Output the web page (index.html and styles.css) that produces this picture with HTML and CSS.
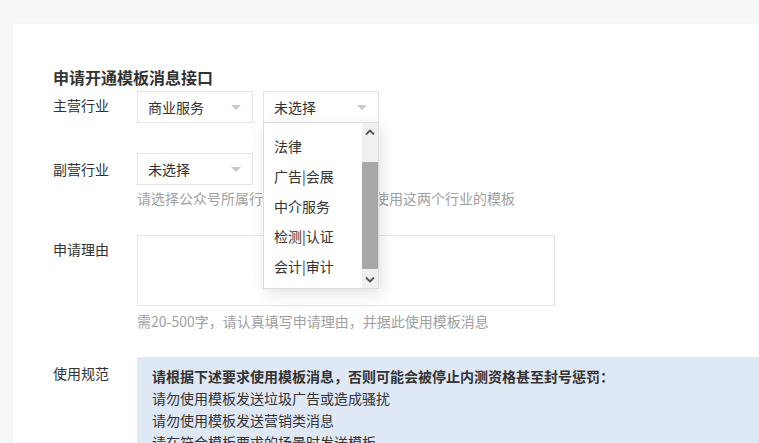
FILE: index.html
```html
<!DOCTYPE html>
<html lang="zh-CN">
<head>
<meta charset="utf-8">
<title>申请开通模板消息接口</title>
<link rel="stylesheet" href="styles.css">
</head>
<body>
<div class="card">
  <h2 class="title">申请开通模板消息接口</h2>

  <div class="row row-main">
    <div class="label">主营行业</div>
    <div class="controls">
      <div class="select"><span>商业服务</span><i class="caret"></i></div>
      <div class="select-wrap">
        <div class="select"><span>未选择</span><i class="caret"></i></div>
        <div class="dropdown">
          <ul class="options">
            <li>法律</li>
            <li>广告|会展</li>
            <li>中介服务</li>
            <li>检测|认证</li>
            <li>会计|审计</li>
            <li>人力资源</li>
          </ul>
          <div class="scrollbar">
            <div class="sb-btn">
              <svg width="10" height="6" viewBox="0 0 10 6"><path d="M1 5.5 L5 1.5 L9 5.5" fill="none" stroke="#505050" stroke-width="1.8"/></svg>
            </div>
            <div class="sb-track"><div class="sb-thumb"></div></div>
            <div class="sb-btn">
              <svg width="10" height="6" viewBox="0 0 10 6"><path d="M1 0.5 L5 4.5 L9 0.5" fill="none" stroke="#505050" stroke-width="1.8"/></svg>
            </div>
          </div>
        </div>
      </div>
    </div>
  </div>

  <div class="row row-sub">
    <div class="label">副营行业</div>
    <div class="field">
      <div class="controls">
        <div class="select"><span>未选择</span><i class="caret"></i></div>
      </div>
      <p class="hint hint-sub">请选择公众号所属行业，选择后你可以使用这两个行业的模板</p>
    </div>
  </div>

  <div class="row row-reason">
    <div class="label label-top">申请理由</div>
    <div class="field">
      <div class="textarea"></div>
      <p class="hint hint-reason">需20-500字，请认真填写申请理由，并据此使用模板消息</p>
    </div>
  </div>

  <div class="row row-rule">
    <div class="label label-rule">使用规范</div>
    <div class="rules">
      <p class="rule-head">请根据下述要求使用模板消息，否则可能会被停止内测资格甚至封号惩罚：</p>
      <p>请勿使用模板发送垃圾广告或造成骚扰</p>
      <p>请勿使用模板发送营销类消息</p>
      <p>请在符合模板要求的场景时发送模板</p>
    </div>
  </div>
</div>
</body>
</html>
```

FILE: styles.css
```css
html, body {
  margin: 0;
  padding: 0;
  overflow: hidden;
  height: 100%;
}
body {
  background: #f5f6f8;
  font-family: "Noto Sans CJK SC", "Microsoft YaHei", sans-serif;
  font-size: 14px;
  color: #333;
}
p { margin: 0; }
ul { margin: 0; padding: 0; list-style: none; }

.card {
  margin: 24px 0 0 13px;
  width: 900px;
  height: 600px;
  background: #fff;
  border-radius: 3px 0 0 0;
  box-shadow: 0 0 3px rgba(0,0,0,0.04);
  padding: 41px 0 0 40px;
  box-sizing: border-box;
}
.title {
  margin: 0;
  font-size: 16px;
  font-weight: bold;
  line-height: 24px;
  color: #333;
}
.row {
  display: flex;
  align-items: flex-start;
}
.label {
  width: 84px;
  flex: none;
  line-height: 32px;
  color: #333;
}
.row-main { margin-top: 2px; }
.row-main .label { line-height: 28px; }
.row-sub { margin-top: 30px; }
.row-reason { margin-top: 27px; }
.label-top { line-height: 28px; }
.row-rule { margin-top: 26px; }
.label-rule { line-height: 32px; }

.controls {
  display: flex;
  gap: 10px;
}
.select {
  width: 116px;
  height: 32px;
  box-sizing: border-box;
  border: 1px solid #e4e4e4;
  background: #fff;
  display: flex;
  align-items: center;
  justify-content: space-between;
  padding: 0 11px 0 10px;
  line-height: 28px;
  color: #333;
}
.caret {
  width: 0;
  height: 0;
  border-left: 5px solid transparent;
  border-right: 5px solid transparent;
  border-top: 5px solid #c8c8c8;
  margin-top: 1px;
}
.select-wrap {
  position: relative;
}
.dropdown {
  position: absolute;
  left: 0;
  top: 31px;
  width: 116px;
  height: 167px;
  box-sizing: border-box;
  border: 1px solid #dcdcdc;
  background: #fff;
  box-shadow: 2px 4px 14px rgba(0,0,0,0.12);
  display: flex;
  z-index: 5;
  overflow: hidden;
}
.options {
  flex: 1;
  padding: 8px 0 0 10px;
}
.options li {
  height: 30px;
  line-height: 30px;
  color: #333;
  white-space: nowrap;
}
.scrollbar {
  width: 16px;
  flex: none;
  background: #f0f0f0;
  display: flex;
  flex-direction: column;
}
.sb-btn {
  height: 17px;
  display: flex;
  align-items: center;
  justify-content: center;
  flex: none;
}
.sb-track {
  flex: 1;
  padding-top: 22px;
}
.sb-thumb {
  height: 107px;
  background: #a8a8a8;
}

.field {
  display: flex;
  flex-direction: column;
}
.hint {
  color: #a0a0a0;
  line-height: 20px;
  white-space: nowrap;
}
.hint-sub { margin-top: 3px; }
.hint-reason { margin-top: 5px; }
.textarea {
  width: 418px;
  height: 71px;
  box-sizing: border-box;
  border: 1px solid #e4e4e4;
  background: #fff;
}
.rules {
  flex: 1;
  background: #dfe8f5;
  padding: 8px 15px 10px;
  line-height: 22px;
  color: #333;
  min-height: 120px;
}
.rules p { white-space: nowrap; }
.rule-head { font-weight: bold; }
```
